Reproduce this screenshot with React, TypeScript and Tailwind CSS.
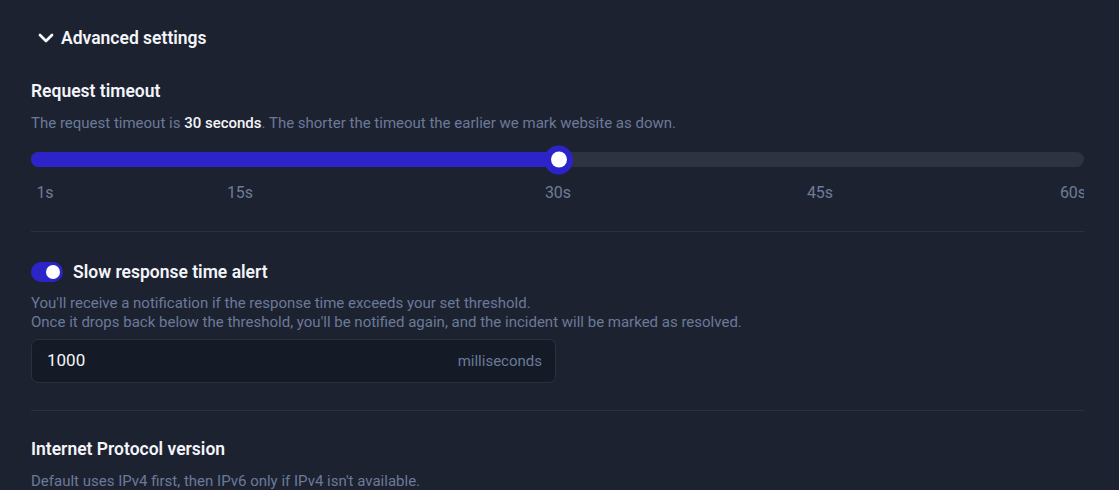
import { ChevronDown } from 'lucide-react';

const MARKS = [
  { label: '1s', left: 'left-[14px]' },
  { label: '15s', left: 'left-[209px]' },
  { label: '30s', left: 'left-[527px]' },
  { label: '45s', left: 'left-[789px]' },
  { label: '60s', left: 'left-[1042px]' },
];

function TimeoutSlider() {
  return (
    <div className="mt-[19px] w-full">
      {/* track */}
      <div className="relative h-[15px] w-full rounded-full bg-[#2d3341]">
        <div className="h-full w-[527px] rounded-full bg-[#2c23c9]" />
        <div className="absolute left-[513px] top-1/2 flex h-[29px] w-[29px] -translate-y-1/2 items-center justify-center rounded-full bg-[#2c23c9]">
          <div className="h-[16px] w-[16px] rounded-full bg-white" />
        </div>
      </div>
      {/* marks */}
      <div className="relative mt-[16px] h-[20px] w-full overflow-hidden text-[16px] leading-[20px] text-[#6e7c99]">
        {MARKS.map((m) => (
          <span key={m.label} className={`absolute top-0 -translate-x-1/2 ${m.left}`}>
            {m.label}
          </span>
        ))}
      </div>
    </div>
  );
}

export default function App() {
  return (
    <div className="min-h-screen w-full bg-[#1d2231] pl-[31px] pr-[35px] pt-[26px] font-['Roboto',sans-serif]">
      {/* Header */}
      <div className="ml-[3px] flex items-center gap-[3px] text-[#f3f5f9]">
        <ChevronDown size={24} strokeWidth={2.75} />
        <span className="text-[17.5px] font-semibold leading-[24px]">Advanced settings</span>
      </div>

      {/* Request timeout */}
      <div className="mt-[29px]">
        <h3 className="text-[17.5px] font-semibold leading-[24px] text-[#f3f5f9]">Request timeout</h3>
        <p className="mt-[10px] text-[15px] leading-[20px] text-[#6b7a98]">
          The request timeout is <span className="font-medium text-[#f3f5f9]">30 seconds</span>. The shorter the
          timeout the earlier we mark website as down.
        </p>
        <TimeoutSlider />
      </div>

      <div className="mt-[28px] h-px w-full bg-[#2b3140]" />

      {/* Slow response time alert */}
      <div className="mt-[28px]">
        <div className="flex items-center gap-[10px]">
          <div className="flex h-[20px] w-[32px] items-center justify-end rounded-full bg-[#2c23c9] pr-[3px]">
            <div className="h-[14px] w-[14px] rounded-full bg-white" />
          </div>
          <span className="text-[17.5px] font-semibold leading-[24px] text-[#f3f5f9]">Slow response time alert</span>
        </div>
        <p className="mt-[10px] text-[15px] leading-[19px] text-[#6b7a98]">
          You'll receive a notification if the response time exceeds your set threshold.
          <br />
          Once it drops back below the threshold, you'll be notified again, and the incident will be marked as resolved.
        </p>
        <div className="mt-[7px] flex h-[44px] w-[525px] items-center justify-between rounded-[7px] border border-[#2a3040] bg-[#141a26] pl-[15px] pr-[13px]">
          <span className="text-[17px] text-[#f3f5f9]">1000</span>
          <span className="text-[15px] text-[#6b7a98]">milliseconds</span>
        </div>
      </div>

      <div className="mt-[27px] h-px w-full bg-[#2b3140]" />

      {/* Internet Protocol version */}
      <div className="mt-[26px]">
        <h3 className="text-[17.5px] font-semibold leading-[24px] text-[#f3f5f9]">Internet Protocol version</h3>
        <p className="mt-[10px] text-[15px] leading-[20px] text-[#6b7a98]">
          Default uses IPv4 first, then IPv6 only if IPv4 isn't available.
        </p>
      </div>
    </div>
  );
}
